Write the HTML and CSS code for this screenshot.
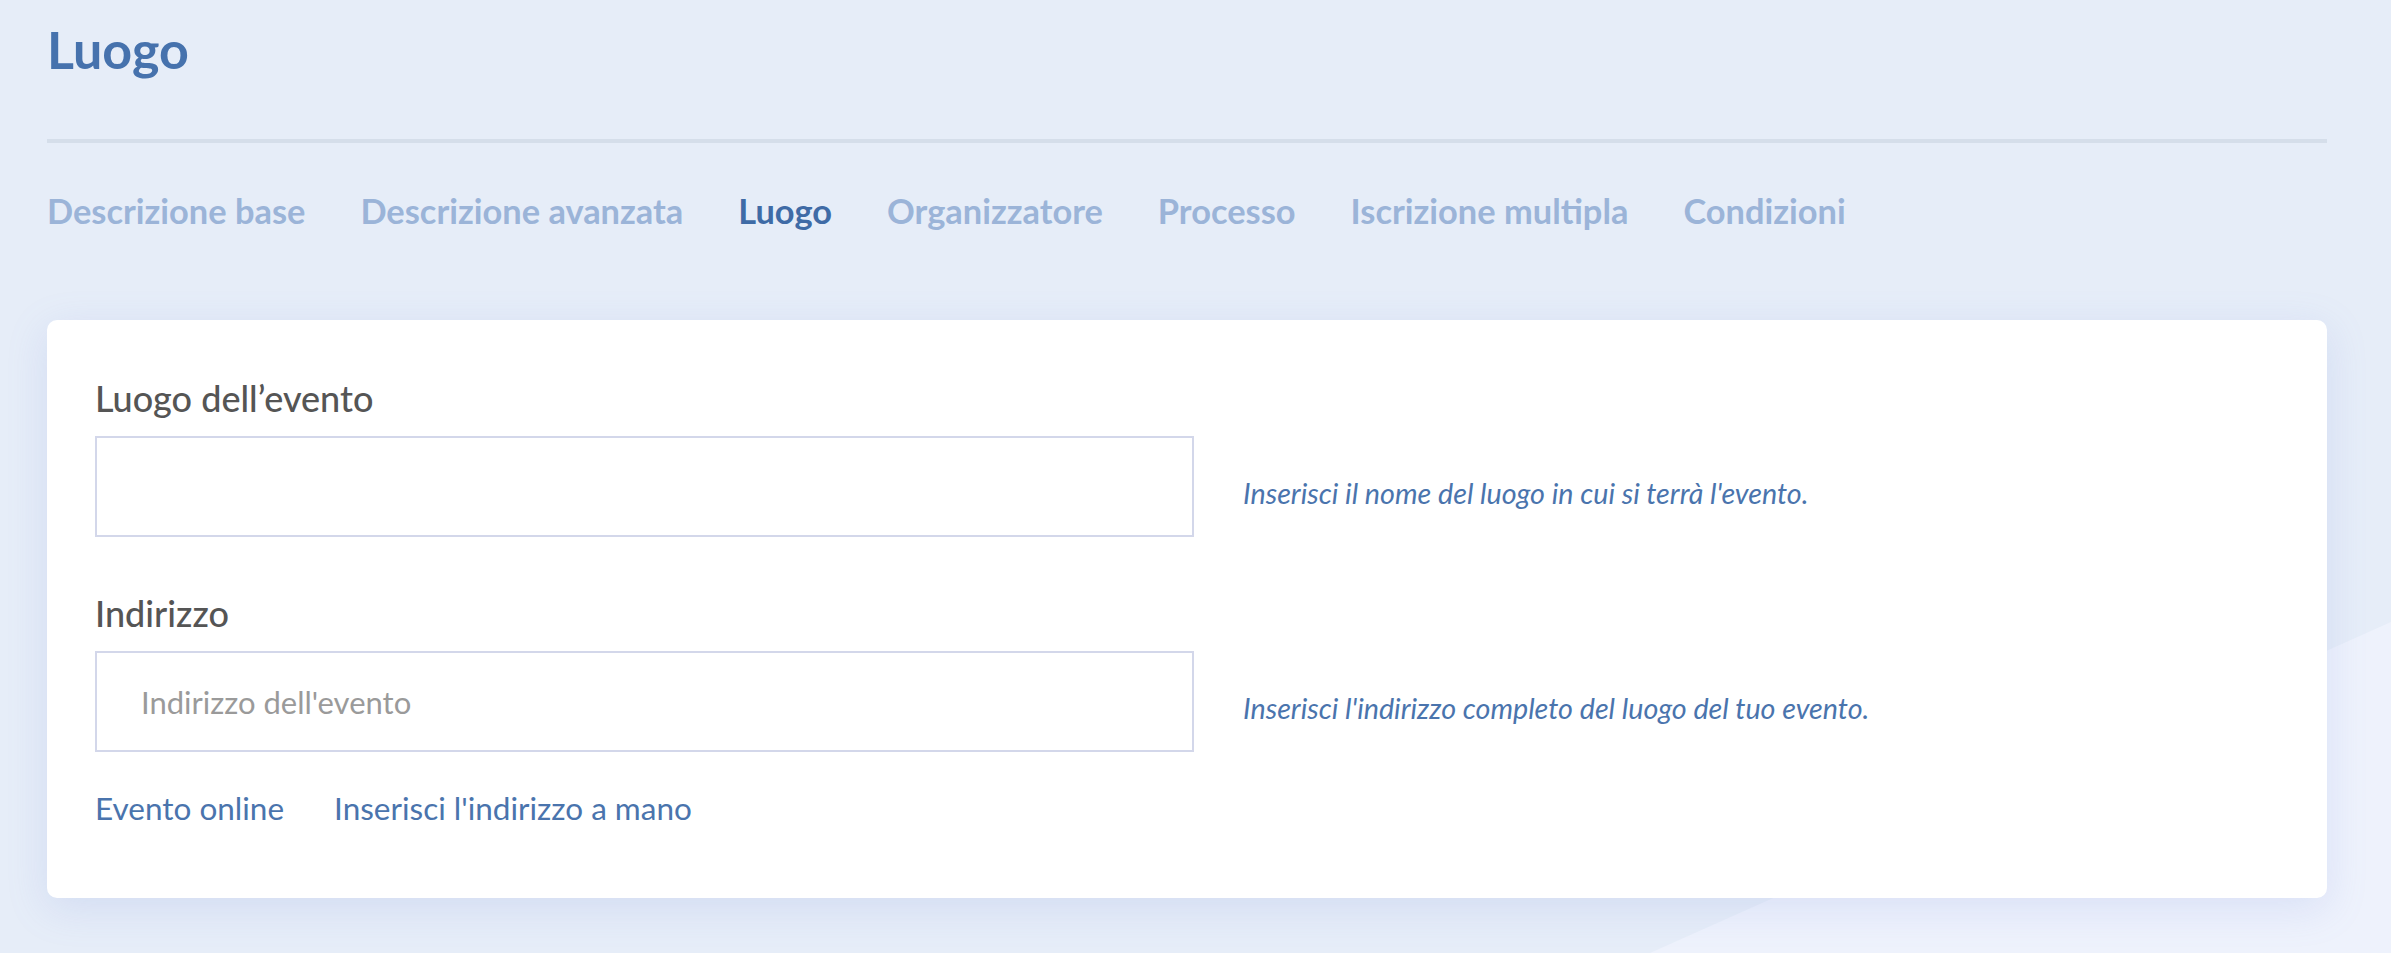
FILE: index.html
```html
<!DOCTYPE html>
<html lang="it">
<head>
    <meta charset="UTF-8">
    <meta name="viewport" content="width=device-width, initial-scale=1.0">
    <title>Luogo</title>
    <link rel="stylesheet" href="styles.css">
</head>
<body>
    <div class="bg-shape"></div>
    <div class="page">
        <h1 class="page-title">Luogo</h1>
        <hr class="divider">
        <nav class="tabs">
            <a href="#" class="tab">Descrizione base</a>
            <a href="#" class="tab">Descrizione avanzata</a>
            <a href="#" class="tab active">Luogo</a>
            <a href="#" class="tab">Organizzatore</a>
            <a href="#" class="tab">Processo</a>
            <a href="#" class="tab">Iscrizione multipla</a>
            <a href="#" class="tab">Condizioni</a>
        </nav>

        <div class="card">
            <div class="form-group">
                <label for="venue">Luogo dell’evento</label>
                <div class="field-row">
                    <input type="text" id="venue" name="venue">
                    <p class="help">Inserisci il nome del luogo in cui si terrà l'evento.</p>
                </div>
            </div>
            <div class="form-group">
                <label for="address">Indirizzo</label>
                <div class="field-row">
                    <input type="text" id="address" name="address" placeholder="Indirizzo dell'evento">
                    <p class="help">Inserisci l'indirizzo completo del luogo del tuo evento.</p>
                </div>
            </div>
            <div class="links">
                <a href="#">Evento online</a>
                <a href="#">Inserisci l'indirizzo a mano</a>
            </div>
        </div>
    </div>
</body>
</html>
```

FILE: styles.css
```css
html, body {
    margin: 0;
    height: 100%;
}
body {
    font-family: Lato, "Noto Sans", sans-serif;
    background-color: #e6edf8;
    position: relative;
    overflow: hidden;
}
/* lighter slanted band in the lower right corner */
.bg-shape {
    position: absolute;
    inset: 0;
    background-color: #eef2fc;
    clip-path: polygon(1650px 953px, 2391px 622px, 2391px 953px);
}
.page {
    position: relative;
    width: 2280px;
    margin-left: 47px;
    padding-top: 20px;
}
.page-title {
    margin: 0;
    font-size: 52px;
    line-height: 58px;
    font-weight: 700;
    color: #4672ad;
}
.divider {
    margin: 61px 0 0 0;
    border: none;
    height: 4px;
    background-color: #d5deea;
}
.tabs {
    display: flex;
    gap: 55px;
    margin-top: 50px;
}
.tab {
    font-size: 34.4px;
    line-height: 36px;
    font-weight: 700;
    color: #9bb4d8;
    text-decoration: none;
}
.tab.active {
    color: #3f6ba6;
}
.card {
    margin-top: 91px;
    background-color: #fff;
    border-radius: 10px;
    box-shadow: 0 10px 40px rgba(120, 145, 220, 0.18);
    padding: 58px 48px 72px 48px;
}
.form-group {
    margin-bottom: 56px;
}
.form-group label {
    display: block;
    font-size: 36px;
    line-height: 40px;
    font-weight: 500;
    color: #555;
    margin-bottom: 18px;
}
.field-row {
    display: flex;
    align-items: center;
}
.field-row input {
    width: 1099px;
    height: 101px;
    box-sizing: border-box;
    border: 2px solid #d3d7ea;
    border-radius: 0;
    padding: 0 44px;
    font-family: inherit;
    font-size: 31px;
    color: #555;
    outline: none;
}
.field-row input::placeholder {
    color: #9a9a9a;
}
.help {
    margin: 12px 0 0 49px;
    font-size: 28.7px;
    font-style: italic;
    color: #4a74ad;
}
.links {
    display: flex;
    gap: 50px;
    margin-top: -18px;
}
.links a {
    font-size: 31.5px;
    line-height: 36px;
    color: #4a74ad;
    text-decoration: none;
}
```
